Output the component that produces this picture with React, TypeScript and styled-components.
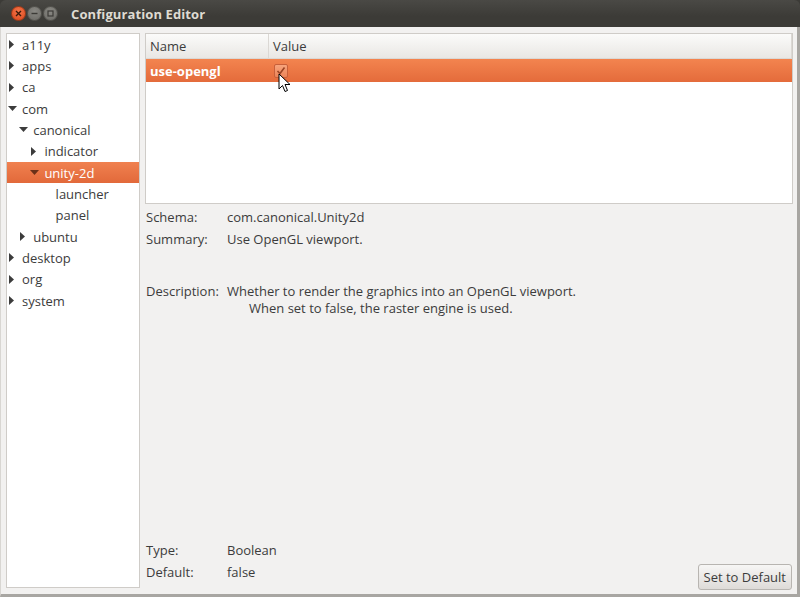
import React from "react";
import styled, { createGlobalStyle } from "styled-components";

const Global = createGlobalStyle`
  html, body { margin: 0; padding: 0; background: #f2f1f0; }
  body { font-family: "Open Sans", "DejaVu Sans", sans-serif; }
  * { box-sizing: border-box; }
`;

const Window = styled.div`
  width: 800px;
  height: 597px;
  display: flex;
  flex-direction: column;
  background: #3c3b37;
  overflow: hidden;
`;

const TitleBar = styled.div`
  height: 27px;
  flex: none;
  display: flex;
  align-items: center;
  padding-left: 11px;
  background: linear-gradient(#4a4945, #3c3b37 60%);
  border-radius: 6px 6px 0 0;
`;

const WinButton = styled.div<{ $close?: boolean }>`
  width: 15px;
  height: 15px;
  border-radius: 50%;
  margin-right: 1px;
  display: flex;
  align-items: center;
  justify-content: center;
  background: ${(p) =>
    p.$close
      ? "radial-gradient(circle at 50% 35%, #f5764a, #d9461c)"
      : "radial-gradient(circle at 50% 35%, #8a8984, #6a6964)"};
  border: 1px solid ${(p) => (p.$close ? "#a03a18" : "#55544f")};
`;

const Title = styled.div`
  margin-left: 12px;
  color: #dfdbd2;
  font-weight: bold;
  font-size: 13px;
  letter-spacing: 0.1px;
`;

const Body = styled.div`
  flex: 1;
  display: flex;
  gap: 5px;
  padding: 6px 4px 6px 5px;
  background: #f2f1f0;
  border-right: 3px solid #a8a6a2;
  border-bottom: 3px solid #a8a6a2;
  border-left: 1px solid #d8d6d2;
`;

const TreePanel = styled.div`
  width: 134px;
  flex: none;
  background: #fff;
  border: 1px solid #cfccc8;
  font-size: 13px;
  color: #3c3c3c;
`;

const TreeRow = styled.div<{ $level: number; $selected?: boolean }>`
  height: 21.33px;
  display: flex;
  align-items: center;
  padding-left: ${(p) => 1 + p.$level * 11.2}px;
  background: ${(p) =>
    p.$selected ? "linear-gradient(#f08150, #e2693a)" : "transparent"};
  color: ${(p) => (p.$selected ? "#fff" : "#3c3c3c")};
`;

const Expander = styled.span`
  width: 14px;
  flex: none;
  display: flex;
  align-items: center;
  justify-content: flex-start;
`;

const Right = styled.div`
  flex: 1;
  display: flex;
  flex-direction: column;
  min-width: 0;
`;

const ListPanel = styled.div`
  height: 171px;
  flex: none;
  background: #fff;
  border: 1px solid #cfccc8;
`;

const HeaderRow = styled.div`
  height: 25px;
  display: flex;
  background: linear-gradient(#fbfbfa, #e9e7e4);
  border-bottom: 1px solid #dbd8d4;
  font-size: 13px;
  color: #3c3c3c;
`;

const HeaderCell = styled.div<{ $w?: number }>`
  ${(p) => (p.$w ? `width: ${p.$w}px;` : "flex: 1;")}
  display: flex;
  align-items: center;
  padding-left: 4px;
  border-right: 1px solid #dbd8d4;
`;

const SelRow = styled.div`
  height: 23px;
  display: flex;
  position: relative;
  background: linear-gradient(#f3844f, #e46b3b);
  color: #fff;
  font-weight: bold;
  font-size: 13px;
`;

const Cell = styled.div<{ $w?: number }>`
  ${(p) => (p.$w ? `width: ${p.$w}px;` : "flex: 1;")}
  display: flex;
  align-items: center;
  padding-left: 4px;
`;

const Check = styled.div`
  width: 14px;
  height: 14px;
  margin-left: 1px;
  border: 1px solid #c8603a;
  border-radius: 2px;
  background: linear-gradient(#f7a47c, #ec8458);
  display: flex;
  align-items: center;
  justify-content: center;
`;

const Cursor = styled.svg`
  position: absolute;
  left: 132px;
  top: 14px;
`;

const Details = styled.div`
  flex: 1;
  display: flex;
  flex-direction: column;
  padding: 5px 0 0 1px;
  font-size: 13px;
  color: #3c3c3c;
`;

const InfoRow = styled.div<{ $mt?: number; $mb?: number }>`
  display: grid;
  grid-template-columns: 81px 1fr;
  line-height: 17px;
  margin-top: ${(p) => p.$mt ?? 0}px;
  margin-bottom: ${(p) => p.$mb ?? 5}px;
`;

const Indented = styled.div`
  padding-left: 22px;
`;

const Spacer = styled.div`
  flex: 1;
`;

const Bottom = styled.div`
  display: flex;
  align-items: flex-end;
  justify-content: space-between;
`;

const Button = styled.button`
  font-family: inherit;
  font-size: 13px;
  color: #3c3c3c;
  height: 26px;
  padding: 0 5px;
  margin-right: 1px;
  border: 1px solid #b8b5b1;
  border-radius: 3px;
  background: linear-gradient(#f7f6f5, #dedbd8);
  margin-bottom: -2px;
`;

const Arrow = ({ open, color }: { open?: boolean; color: string }) => (
  <svg width="9" height="9" viewBox="0 0 9 9">
    {open ? (
      <polygon points="0,2 9,2 4.5,7" fill={color} />
    ) : (
      <polygon points="1,0 6,4.5 1,9" fill={color} />
    )}
  </svg>
);

type Node = { label: string; level: number; arrow?: "open" | "closed"; selected?: boolean };

const nodes: Node[] = [
  { label: "a11y", level: 0, arrow: "closed" },
  { label: "apps", level: 0, arrow: "closed" },
  { label: "ca", level: 0, arrow: "closed" },
  { label: "com", level: 0, arrow: "open" },
  { label: "canonical", level: 1, arrow: "open" },
  { label: "indicator", level: 2, arrow: "closed" },
  { label: "unity-2d", level: 2, arrow: "open", selected: true },
  { label: "launcher", level: 3 },
  { label: "panel", level: 3 },
  { label: "ubuntu", level: 1, arrow: "closed" },
  { label: "desktop", level: 0, arrow: "closed" },
  { label: "org", level: 0, arrow: "closed" },
  { label: "system", level: 0, arrow: "closed" },
];

export default function App() {
  return (
    <>
      <Global />
      <Window>
        <TitleBar>
          <WinButton $close>
            <svg width="7" height="7" viewBox="0 0 7 7">
              <path d="M1 1L6 6M6 1L1 6" stroke="#3a1a0a" strokeWidth="1.4" />
            </svg>
          </WinButton>
          <WinButton>
            <svg width="7" height="7" viewBox="0 0 7 7">
              <path d="M0.5 3.5H6.5" stroke="#3c3b37" strokeWidth="1.4" />
            </svg>
          </WinButton>
          <WinButton>
            <svg width="7" height="7" viewBox="0 0 7 7">
              <rect x="1" y="1" width="5" height="5" fill="none" stroke="#3c3b37" strokeWidth="1.2" />
            </svg>
          </WinButton>
          <Title>Configuration Editor</Title>
        </TitleBar>
        <Body>
          <TreePanel>
            {nodes.map((n) => (
              <TreeRow key={n.label} $level={n.level} $selected={n.selected}>
                <Expander>
                  {n.arrow && (
                    <Arrow open={n.arrow === "open"} color={n.selected ? "#6a3018" : "#3c3c3c"} />
                  )}
                </Expander>
                {n.label}
              </TreeRow>
            ))}
          </TreePanel>
          <Right>
            <ListPanel>
              <HeaderRow>
                <HeaderCell $w={123}>Name</HeaderCell>
                <HeaderCell>Value</HeaderCell>
              </HeaderRow>
              <SelRow>
                <Cell $w={123}>use-opengl</Cell>
                <Cell>
                  <Check>
                    <svg width="10" height="10" viewBox="0 0 10 10">
                      <path d="M1.5 5L4 7.5L8.5 1.5" fill="none" stroke="#9a4424" strokeWidth="1.6" />
                    </svg>
                  </Check>
                </Cell>
                <Cursor width="13" height="20" viewBox="0 0 13 20">
                  <path d="M1 1V16L4.5 12.5L7 18.5L9.5 17.5L7 11.5H12Z" fill="#fff" stroke="#000" strokeWidth="1" strokeLinejoin="round" />
                </Cursor>
              </SelRow>
            </ListPanel>
            <Details>
              <InfoRow>
                <span>Schema:</span>
                <span>com.canonical.Unity2d</span>
              </InfoRow>
              <InfoRow>
                <span>Summary:</span>
                <span>Use OpenGL viewport.</span>
              </InfoRow>
              <InfoRow $mt={30}>
                <span>Description:</span>
                <div>
                  <div>Whether to render the graphics into an OpenGL viewport.</div>
                  <Indented>When set to false, the raster engine is used.</Indented>
                </div>
              </InfoRow>
              <Spacer />
              <Bottom>
                <div>
                  <InfoRow>
                    <span>Type:</span>
                    <span>Boolean</span>
                  </InfoRow>
                  <InfoRow $mb={7}>
                    <span>Default:</span>
                    <span>false</span>
                  </InfoRow>
                </div>
                <Button>Set to Default</Button>
              </Bottom>
            </Details>
          </Right>
        </Body>
      </Window>
    </>
  );
}
